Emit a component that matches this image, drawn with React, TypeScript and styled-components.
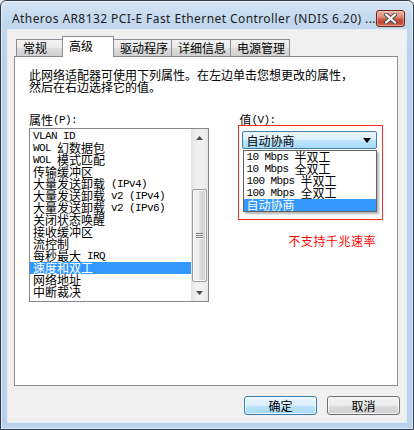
import styled, { createGlobalStyle } from "styled-components";

const GlobalStyle = createGlobalStyle`
  html, body {
    margin: 0;
    padding: 0;
    background: #ffffff;
  }
  body {
    font-family: "Noto Sans CJK SC", sans-serif;
    font-size: 12px;
    color: #000;
  }
`;

const properties = [
  "VLAN ID",
  "WOL 幻数据包",
  "WOL 模式匹配",
  "传输缓冲区",
  "大量发送卸载 (IPv4)",
  "大量发送卸载 v2 (IPv4)",
  "大量发送卸载 v2 (IPv6)",
  "关闭状态唤醒",
  "接收缓冲区",
  "流控制",
  "每秒最大 IRQ",
  "速度和双工",
  "网络地址",
  "中断裁决",
];

const speeds = [
  "10 Mbps 半双工",
  "10 Mbps 全双工",
  "100 Mbps 半双工",
  "100 Mbps 全双工",
  "自动协商",
];

const tabs = [
  { label: "常规", width: 47 },
  { label: "高级", width: 52 },
  { label: "驱动程序", width: 59 },
  { label: "详细信息", width: 60 },
  { label: "电源管理", width: 60 },
];

// SimSun 的半角字符只有全角一半宽，这里用等宽字体模拟
const Half = styled.span`
  display: inline-block;
  vertical-align: top;
  height: 12px;
  line-height: 13px;
  font-family: "Liberation Mono", monospace;
  font-size: 11px;
  letter-spacing: -0.6px;
  white-space: pre;
`;

function SimText({ text }: { text: string }) {
  const parts = text.split(/([\x20-\x7e]+)/).filter((p) => p !== "");
  return (
    <>
      {parts.map((p, i) =>
        /^[\x20-\x7e]+$/.test(p) ? <Half key={i}>{p}</Half> : <span key={i}>{p}</span>
      )}
    </>
  );
}

export default function App() {
  const selectedTab = 1;
  const selectedProp = 11;
  const selectedSpeed = 4;

  return (
    <>
      <GlobalStyle />
      <Window>
        <TitleBar>
          <Title>Atheros AR8132 PCI-E Fast Ethernet Controller (NDIS 6.20) ...</Title>
          <CloseBtn>
            <svg width="13" height="11" viewBox="0 0 13 11">
              <path d="M2 1.5 L11 9.5 M11 1.5 L2 9.5" stroke="#4a4a4a" strokeWidth="4" strokeLinecap="round" />
              <path d="M2 1.5 L11 9.5 M11 1.5 L2 9.5" stroke="#ffffff" strokeWidth="2.2" strokeLinecap="round" />
            </svg>
          </CloseBtn>
        </TitleBar>

        <Client>
          <TabRow>
            {tabs.map((t, i) => (
              <Tab key={t.label} $active={i === selectedTab} $w={t.width}>
                {t.label}
              </Tab>
            ))}
          </TabRow>

          <Panel>
            <Desc>
              此网络适配器可使用下列属性。在左边单击您想更改的属性，
              <br />
              然后在右边选择它的值。
            </Desc>

            <Columns>
              <LeftCol>
                <Label>
                  <SimText text="属性(P):" />
                </Label>
                <ListBox>
                  <Items>
                    {properties.map((p, i) => (
                      <Item key={p} $selected={i === selectedProp}>
                        <SimText text={p} />
                      </Item>
                    ))}
                  </Items>
                  <ScrollBar>
                    <ArrowBtn>
                      <svg width="7" height="4" viewBox="0 0 7 4">
                        <path d="M3.5 0 L7 4 L0 4 Z" fill="#4d4d4d" />
                      </svg>
                    </ArrowBtn>
                    <Track>
                      <Thumb style={{ marginTop: 43, height: 93 }}>
                        <Grip />
                        <Grip />
                        <Grip />
                      </Thumb>
                    </Track>
                    <ArrowBtn>
                      <svg width="7" height="4" viewBox="0 0 7 4">
                        <path d="M0 0 L7 0 L3.5 4 Z" fill="#4d4d4d" />
                      </svg>
                    </ArrowBtn>
                  </ScrollBar>
                </ListBox>
              </LeftCol>

              <RightCol>
                <Label $indent>
                  <SimText text="值(V):" />
                </Label>
                <RedBox>
                  <Combo>
                    <span>自动协商</span>
                    <svg width="8" height="5" viewBox="0 0 8 5">
                      <path d="M0 0 L8 0 L4 5 Z" fill="#000" />
                    </svg>
                  </Combo>
                  <DropList>
                    {speeds.map((s, i) => (
                      <DropItem key={s} $selected={i === selectedSpeed}>
                        <SimText text={s} />
                      </DropItem>
                    ))}
                  </DropList>
                </RedBox>
                <Note>不支持千兆速率</Note>
              </RightCol>
            </Columns>
          </Panel>

          <ButtonRow>
            <Button $primary>确定</Button>
            <Button>取消</Button>
          </ButtonRow>
        </Client>
      </Window>
    </>
  );
}

const Window = styled.div`
  width: 414px;
  height: 430px;
  box-sizing: border-box;
  display: flex;
  flex-direction: column;
  border: 1px solid #2f3c4c;
  border-radius: 6px 6px 0 0;
  background: linear-gradient(180deg, #d6e5f5 0px, #c2d8ee 20px, #b9d1ea 60px, #b9d1ea 100%);
  box-shadow: inset 0 0 0 1px rgba(255, 255, 255, 0.55);
`;

const TitleBar = styled.div`
  height: 29px;
  flex: none;
  display: flex;
  align-items: flex-start;
  justify-content: space-between;
  padding: 0 8px 0 11px;
`;

const Title = styled.div`
  margin-top: 11px;
  font-family: "Noto Sans", "Liberation Sans", sans-serif;
  font-size: 12px;
  line-height: 14px;
  letter-spacing: 0.42px;
  color: #1b1b1b;
  white-space: nowrap;
`;

const CloseBtn = styled.div`
  margin-top: 9px;
  width: 31px;
  height: 17px;
  box-sizing: border-box;
  border: 1px solid #6b2318;
  border-radius: 3px;
  display: flex;
  align-items: center;
  justify-content: center;
  background: linear-gradient(180deg, #eab3a3 0%, #d98b78 40%, #c65a45 55%, #c0452f 75%, #d8745c 100%);
  box-shadow: inset 0 0 0 1px rgba(255, 220, 210, 0.45);
`;

const Client = styled.div`
  flex: 1;
  margin: 0 7px 7px 7px;
  background: #f0f0f0;
  box-shadow: 0 0 0 1px #e4ecf5;
  display: flex;
  flex-direction: column;
  padding-top: 6px;
`;

const TabRow = styled.div`
  display: flex;
  align-items: flex-end;
  height: 21px;
  margin: 0 0 -1px 8px;
  position: relative;
  z-index: 1;
`;

const Tab = styled.div<{ $active?: boolean; $w: number }>`
  width: ${(p) => p.$w}px;
  height: ${(p) => (p.$active ? 21 : 17)}px;
  margin-bottom: ${(p) => (p.$active ? 0 : 1)}px;
  margin-left: -1px;
  &:first-child {
    margin-left: 0;
  }
  box-sizing: border-box;
  border: 1px solid #898c95;
  border-bottom: none;
  padding-left: 6px;
  font-size: 12px;
  line-height: ${(p) => (p.$active ? 17 : 16)}px;
  white-space: nowrap;
  position: relative;
  z-index: ${(p) => (p.$active ? 2 : 0)};
  background: ${(p) =>
    p.$active
      ? "#ffffff"
      : "linear-gradient(180deg, #f2f2f2 0%, #ebebeb 50%, #dddddd 51%, #cfcfcf 100%)"};
`;

const Panel = styled.div`
  flex: none;
  height: 330px;
  margin: 0 8px 0 6px;
  box-sizing: border-box;
  border: 1px solid #898c95;
  background: #ffffff;
  padding: 12px 14px 0 14px;
`;

const Desc = styled.div`
  line-height: 12px;
  white-space: nowrap;
`;

const Columns = styled.div`
  display: flex;
  gap: 29px;
  margin-top: 21px;
`;

const LeftCol = styled.div`
  width: 186px;
  display: flex;
  flex-direction: column;
`;

const RightCol = styled.div`
  width: 149px;
  display: flex;
  flex-direction: column;
`;

const Label = styled.div<{ $indent?: boolean }>`
  height: 12px;
  line-height: 12px;
  padding-left: ${(p) => (p.$indent ? 1 : 0)}px;
  white-space: pre;
`;

const ListBox = styled.div`
  margin-top: 2px;
  height: 174px;
  box-sizing: border-box;
  border: 1px solid #828790;
  display: flex;
  background: #fff;
`;

const Items = styled.div`
  flex: 1;
  padding-top: 1px;
  overflow: hidden;
`;

const Item = styled.div<{ $selected?: boolean }>`
  height: 12px;
  line-height: 12px;
  padding-left: 3px;
  white-space: pre;
  background: ${(p) => (p.$selected ? "#3399ff" : "transparent")};
  color: ${(p) => (p.$selected ? "#ffffff" : "#000000")};
`;

const ScrollBar = styled.div`
  width: 17px;
  flex: none;
  display: flex;
  flex-direction: column;
  background: linear-gradient(90deg, #e3e3e3 0%, #f0f0f0 30%, #f0f0f0 70%, #e6e6e6 100%);
`;

const ArrowBtn = styled.div`
  height: 17px;
  flex: none;
  display: flex;
  align-items: center;
  justify-content: center;
`;

const Track = styled.div`
  flex: 1;
  display: flex;
  flex-direction: column;
  align-items: center;
`;

const Thumb = styled.div`
  width: 15px;
  box-sizing: border-box;
  border: 1px solid #9b9b9b;
  border-radius: 2px;
  background: linear-gradient(90deg, #f4f4f4 0%, #ececec 45%, #dadada 55%, #d2d2d2 100%);
  box-shadow: inset 0 0 0 1px rgba(255, 255, 255, 0.8);
  display: flex;
  flex-direction: column;
  align-items: center;
  justify-content: center;
  gap: 1px;
`;

const Grip = styled.div`
  width: 7px;
  height: 1px;
  background: #777;
  box-shadow: 0 1px 0 #fff;
`;

const RedBox = styled.div`
  margin-top: -1px;
  height: 95px;
  box-sizing: border-box;
  border: 1px solid #ff2a2a;
  padding: 5px 5px 0 3px;
`;

const Combo = styled.div`
  height: 18px;
  box-sizing: border-box;
  border: 1px solid #3c7fb1;
  border-radius: 2px;
  padding: 0 5px 0 3px;
  display: flex;
  align-items: center;
  justify-content: space-between;
  font-size: 12px;
  background: linear-gradient(180deg, #eaf6fd 0%, #d9f0fc 50%, #bee6fd 51%, #a7d9f5 100%);
`;

const DropList = styled.div`
  margin: 1px 0 0 1px;
  box-sizing: border-box;
  border: 1px solid #646464;
  background: #fff;
  box-shadow: 2px 2px 2px rgba(0, 0, 0, 0.3);
`;

const DropItem = styled.div<{ $selected?: boolean }>`
  height: 12px;
  line-height: 12px;
  padding-left: 2px;
  white-space: pre;
  background: ${(p) => (p.$selected ? "#3399ff" : "transparent")};
  color: ${(p) => (p.$selected ? "#ffffff" : "#000000")};
`;

const Note = styled.div`
  margin-top: 15px;
  padding-left: 50px;
  color: #ff0000;
  line-height: 12px;
  letter-spacing: 0.5px;
`;

const ButtonRow = styled.div`
  display: flex;
  justify-content: flex-end;
  gap: 10px;
  margin-top: 10px;
  padding-right: 6px;
`;

const Button = styled.div<{ $primary?: boolean }>`
  width: 73px;
  height: 19px;
  box-sizing: border-box;
  border: 1px solid ${(p) => (p.$primary ? "#3c7fb1" : "#707070")};
  border-radius: 3px;
  display: flex;
  align-items: center;
  justify-content: center;
  font-size: 12px;
  background: ${(p) =>
    p.$primary
      ? "linear-gradient(180deg, #eaf6fd 0%, #d9f0fc 50%, #bee6fd 51%, #a7d9f5 100%)"
      : "linear-gradient(180deg, #f2f2f2 0%, #ebebeb 50%, #dddddd 51%, #cfcfcf 100%)"};
  box-shadow: inset 0 0 0 1px rgba(255, 255, 255, 0.7);
`;
